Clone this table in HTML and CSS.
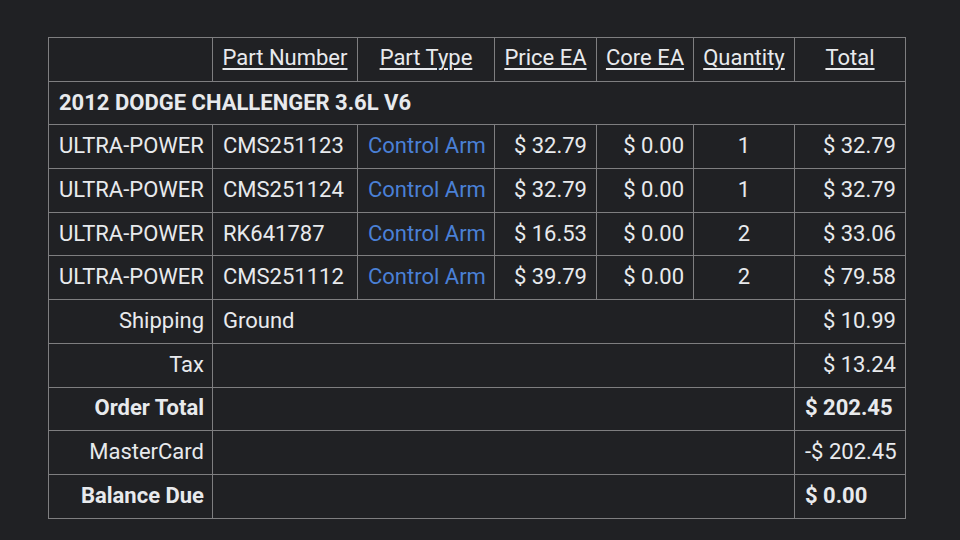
FILE: index.html
```html
<!DOCTYPE html>
<html lang="en">
<head>
  <meta charset="UTF-8">
  <meta name="viewport" content="width=device-width, initial-scale=1.0">
  <title>Order Summary</title>
  <link rel="stylesheet" href="styles.css">
</head>
<body>
  <div class="order-wrap">
    <table class="order-table">
      <colgroup>
        <col class="c-brand">
        <col class="c-part">
        <col class="c-type">
        <col class="c-price">
        <col class="c-core">
        <col class="c-qty">
        <col class="c-total">
      </colgroup>
      <thead>
        <tr>
          <th></th>
          <th><a href="#">Part Number</a></th>
          <th><a href="#">Part Type</a></th>
          <th><a href="#">Price EA</a></th>
          <th><a href="#">Core EA</a></th>
          <th><a href="#">Quantity</a></th>
          <th><a href="#">Total</a></th>
        </tr>
      </thead>
      <tbody>
        <tr class="vehicle">
          <td colspan="7">2012 DODGE CHALLENGER 3.6L V6</td>
        </tr>
        <tr>
          <td>ULTRA-POWER</td>
          <td>CMS251123</td>
          <td><a class="type-link" href="#">Control Arm</a></td>
          <td class="num">$ 32.79</td>
          <td class="num">$ 0.00</td>
          <td class="qty">1</td>
          <td class="num">$ 32.79</td>
        </tr>
        <tr>
          <td>ULTRA-POWER</td>
          <td>CMS251124</td>
          <td><a class="type-link" href="#">Control Arm</a></td>
          <td class="num">$ 32.79</td>
          <td class="num">$ 0.00</td>
          <td class="qty">1</td>
          <td class="num">$ 32.79</td>
        </tr>
        <tr>
          <td>ULTRA-POWER</td>
          <td>RK641787</td>
          <td><a class="type-link" href="#">Control Arm</a></td>
          <td class="num">$ 16.53</td>
          <td class="num">$ 0.00</td>
          <td class="qty">2</td>
          <td class="num">$ 33.06</td>
        </tr>
        <tr>
          <td>ULTRA-POWER</td>
          <td>CMS251112</td>
          <td><a class="type-link" href="#">Control Arm</a></td>
          <td class="num">$ 39.79</td>
          <td class="num">$ 0.00</td>
          <td class="qty">2</td>
          <td class="num">$ 79.58</td>
        </tr>
        <!-- summary rows -->
        <tr>
          <td class="label">Shipping</td>
          <td colspan="5">Ground</td>
          <td class="num">$ 10.99</td>
        </tr>
        <tr>
          <td class="label">Tax</td>
          <td colspan="5"></td>
          <td class="num">$ 13.24</td>
        </tr>
        <tr class="strong">
          <td class="label">Order Total</td>
          <td colspan="5"></td>
          <td>$ 202.45</td>
        </tr>
        <tr>
          <td class="label">MasterCard</td>
          <td colspan="5"></td>
          <td class="num">-$ 202.45</td>
        </tr>
        <tr class="strong">
          <td class="label">Balance Due</td>
          <td colspan="5"></td>
          <td>$ 0.00</td>
        </tr>
      </tbody>
    </table>
  </div>
</body>
</html>
```

FILE: styles.css
```css
html, body {
  margin: 0;
  padding: 0;
  height: 100%;
  background-color: #202124;
  font-family: Roboto, "Liberation Sans", Arial, sans-serif;
  color: #e8eaed;
}
.order-wrap {
  padding: 37px 0 0 48px;
}
.order-table {
  border-collapse: collapse;
  table-layout: fixed;
  width: 857px;
  font-size: 22px;
}
.c-brand { width: 164px; }
.c-part  { width: 145px; }
.c-type  { width: 137px; }
.c-price { width: 102px; }
.c-core  { width: 97px; }
.c-qty   { width: 101px; }
.c-total { width: 111px; }

.order-table tr {
  height: 43.7px;
}
.order-table th,
.order-table td {
  border: 1px solid #7e7e80;
  padding: 0 10px 2px;
  white-space: nowrap;
  text-align: left;
  font-weight: normal;
}
.order-table th {
  text-align: center;
  padding: 0 2px 3px;
}
.order-table th a {
  color: #e8eaed;
  text-decoration: underline;
  text-underline-offset: 3px;
}
.vehicle td {
  font-weight: bold;
}
.type-link {
  color: #4a80d6;
  text-decoration: none;
}
.order-table td.num {
  text-align: right;
  padding-right: 9px;
}
.order-table td.qty {
  text-align: center;
}
.order-table td.label {
  text-align: right;
  padding-right: 8px;
}
.strong td {
  font-weight: bold;
}
```
